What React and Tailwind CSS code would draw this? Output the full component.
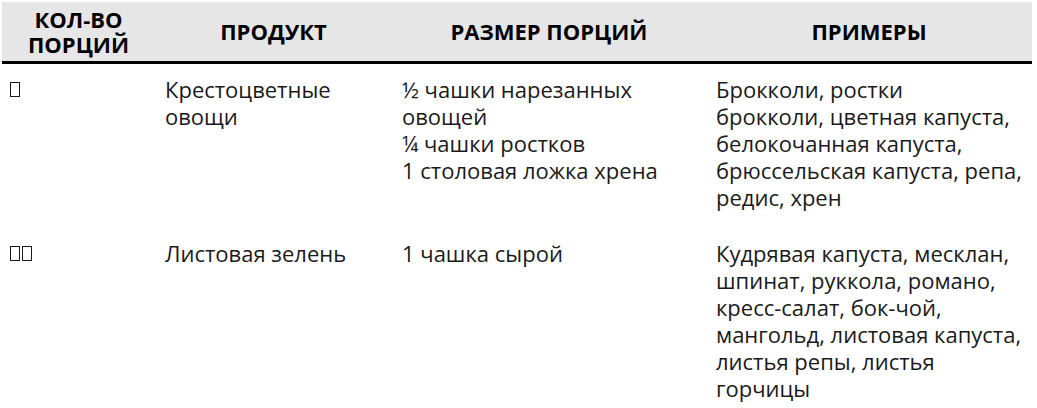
import React from 'react';

const rows = [
  {
    qty: 1,
    product: ['Крестоцветные', 'овощи'],
    size: ['½ чашки нарезанных', 'овощей', '¼ чашки ростков', '1 столовая ложка хрена'],
    examples: ['Брокколи, ростки', 'брокколи, цветная капуста,', 'белокочанная капуста,', 'брюссельская капуста, репа,', 'редис, хрен'],
  },
  {
    qty: 2,
    product: ['Листовая зелень'],
    size: ['1 чашка сырой'],
    examples: ['Кудрявая капуста, месклан,', 'шпинат, руккола, романо,', 'кресс-салат, бок-чой,', 'мангольд, листовая капуста,', 'листья репы, листья', 'горчицы'],
  },
];

// пустые «квадратики» вместо значков порций
function Boxes({ count }) {
  return (
    <div className="flex gap-[2px] h-[27px] items-center">
      {Array.from({ length: count }).map((_, i) => (
        <span key={i} className="inline-block w-[10px] h-[15px] border-[1.5px] border-[#1a1a1a]"></span>
      ))}
    </div>
  );
}

function Lines({ items }) {
  return (
    <div>
      {items.map((t, i) => (
        <div key={i} className="whitespace-nowrap">{t}</div>
      ))}
    </div>
  );
}

export default function App() {
  const cols = 'grid grid-cols-[153px_237px_314px_326px]';
  return (
    <div className="w-[1037px] h-[408px] bg-white overflow-hidden pt-[2px] pl-[2px] text-[#1a1a1a] font-['Open_Sans',sans-serif]">
      <div className="w-[1030px]">
        <div className={`${cols} h-[59px] bg-[#e6e6e7] items-center text-center font-bold text-[22px] leading-[25px] text-black`}>
          <div>КОЛ-ВО<br />ПОРЦИЙ</div>
          <div>ПРОДУКТ</div>
          <div>РАЗМЕР ПОРЦИЙ</div>
          <div>ПРИМЕРЫ</div>
        </div>
        <div className="h-[3px] bg-black"></div>
        {rows.map((r, i) => (
          <div key={i} className={`${cols} pt-[12px] pb-[17px] text-[22px] leading-[27px]`}>
            <div className="pl-[8px]"><Boxes count={r.qty} /></div>
            <div className="pl-[10px]"><Lines items={r.product} /></div>
            <div className="pl-[10px]"><Lines items={r.size} /></div>
            <div className="pl-[10px]"><Lines items={r.examples} /></div>
          </div>
        ))}
      </div>
    </div>
  );
}
